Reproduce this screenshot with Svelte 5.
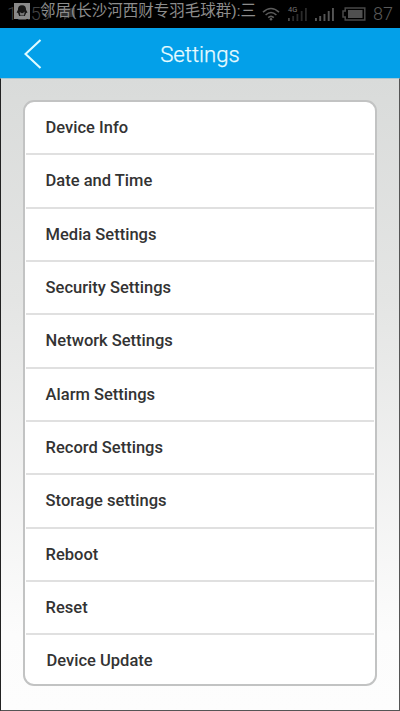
<script>
  const items = [
    'Device Info',
    'Date and Time',
    'Media Settings',
    'Security Settings',
    'Network Settings',
    'Alarm Settings',
    'Record Settings',
    'Storage settings',
    'Reboot',
    'Reset',
    'Device Update'
  ]

  const bars = [3, 5, 7, 10, 13]
</script>

<div class='screen'>
  <div class='status'>
    <span class='clock'>12:59</span>
    <svg class='bubble' width='17' height='14' viewBox='0 0 17 14'>
      <path d='M1 1h15v9H9l-4 3v-3H1z' fill='#303030' />
    </svg>
    <div class='indicators'>
      <svg class='wifi' width='18' height='14' viewBox='0 0 18 14'>
        <g fill='none' stroke='#5c5c5c' stroke-width='1.6'>
          <path d='M1 5.2Q9-2.2 17 5.2' />
          <path d='M3.6 8Q9 3 14.4 8' />
          <path d='M6.2 10.6Q9 8 11.8 10.6' />
        </g>
        <circle cx='9' cy='12.3' r='1.3' fill='#5c5c5c' />
      </svg>
      <div class='mobile'>
        <svg width='19' height='13' viewBox='0 0 19 13'>
          {#each bars as h, i}
            <rect x={i * 4.25} y={13 - h} width='1.8' height={h} fill={i ? '#2b2b2b' : '#484848'} />
          {/each}
        </svg>
        <span class='net'>4G</span>
      </div>
      <svg class='signal' width='19' height='13' viewBox='0 0 19 13'>
        {#each bars as h, i}
          <rect x={i * 4.25} y={13 - h} width='1.9' height={h} fill='#555' />
        {/each}
      </svg>
      <svg class='battery' width='24' height='14' viewBox='0 0 24 14'>
        <path d='M3.2 1h19.6v12H3.2V10H1V4h2.2z' fill='none' stroke='#484848' stroke-width='1.5' />
        <rect x='6' y='3' width='14.5' height='8' fill='#505050' />
      </svg>
      <span class='level'>87</span>
    </div>
    <div class='ticker'>
      <svg width='16' height='16' viewBox='0 0 16 16'>
        <rect width='16' height='16' fill='#898989' />
        <path d='M8 2.3c-3 0-4.2 2.1-4 4.5L2.6 9.6l1.5.5 1 2.8h5.8l1.2-2.8 1.4-.7L12 6.8C12.2 4.4 11 2.3 8 2.3z' fill='#151515' />
        <path d='M5.6 8.8Q8 11.8 10.8 8.6L10 12.6H6.3z' fill='#777' />
      </svg>
      <span>邻居(长沙河西财专羽毛球群):三</span>
    </div>
  </div>

  <header>
    <button aria-label='Back'>
      <svg width='18' height='30' viewBox='0 0 18 30'>
        <path d='M16.5 1L1.5 15L16.5 29' fill='none' stroke='#e0fbff' stroke-width='2.1' />
      </svg>
    </button>
    <h1>Settings</h1>
  </header>

  <main>
    <ul>
      {#each items as item, i}
        <li class:last={i === items.length - 1}>{item}</li>
      {/each}
    </ul>
  </main>
</div>

<style>
  :global(body){
    margin: 0;
    background: #000;
  }

  .screen{
    display: flex;
    flex-direction: column;
    width: 400px;
    height: 711px;
    overflow: hidden;
    font-family: Roboto, 'Noto Sans CJK SC', sans-serif;
  }

  .status{
    position: relative;
    display: flex;
    align-items: center;
    box-sizing: border-box;
    height: 28px;
    padding: 0 7px;
    background: #000;
  }

  .clock{
    width: 46px;
    color: #444;
    font-size: 18px;
    font-weight: 300;
    line-height: 30px;
  }

  .bubble{
    margin-left: 6px;
  }

  .indicators{
    display: flex;
    align-items: center;
    margin-left: auto;
  }

  .wifi{
    margin-right: 8px;
  }

  .mobile{
    display: grid;
    width: 20px;
    margin-right: 7px;
  }

  .mobile > *{
    grid-area: 1 / 1;
  }

  .net{
    margin-top: -2px;
    color: #777;
    font-size: 7.5px;
    font-weight: 400;
    line-height: 7px;
  }

  .signal{
    margin-right: 8px;
  }

  .battery{
    margin-right: 7px;
  }

  .level{
    width: 20px;
    color: #5a5a5a;
    font-size: 18px;
    font-weight: 300;
    line-height: 30px;
  }

  .ticker{
    position: absolute;
    top: 0;
    left: 14px;
    display: flex;
    align-items: center;
    gap: 10px;
    height: 21px;
    color: #8c8c8c;
    font-size: 15.5px;
    font-weight: 400;
    line-height: 21px;
    white-space: nowrap;
  }

  .ticker span{
    padding-top: 2px;
  }

  header{
    display: grid;
    grid-template-columns: 60px 1fr 60px;
    align-items: center;
    height: 50px;
    background: #03a0e9;
  }

  button{
    display: flex;
    margin: 0;
    padding: 0 0 0 24px;
    border: 0;
    background: none;
  }

  h1{
    margin: 0;
    padding-top: 1px;
    color: #e9fcff;
    font-size: 22.2px;
    font-weight: 300;
    line-height: 50px;
    text-align: center;
    -webkit-text-stroke: .25px #e9fcff;
  }

  main{
    flex: 1;
    box-sizing: border-box;
    padding: 22px 22px 0 22px;
    border: 1px solid #555;
    border-top: 1px solid #a5c6d2;
    border-left-color: #222;
    background: linear-gradient(#d9dbda, #e4e5e4 35%, #fcfcfc 88%, #fdfdfd);
  }

  ul{
    box-sizing: border-box;
    height: 586px;
    margin: -1px 0 0;
    padding: 0 1px;
    border: 2px solid #c2c3c3;
    border-radius: 11px;
    background: #fff;
    list-style: none;
  }

  li{
    box-sizing: border-box;
    height: 53.33px;
    padding-left: 19.6px;
    border-bottom: 2px solid #e0e0e0;
    color: #333;
    font-size: 16.5px;
    font-weight: 500;
    line-height: 51.5px;
  }

  .last{
    height: 49px;
    padding-left: 20.6px;
    border-bottom: 0;
  }
</style>
